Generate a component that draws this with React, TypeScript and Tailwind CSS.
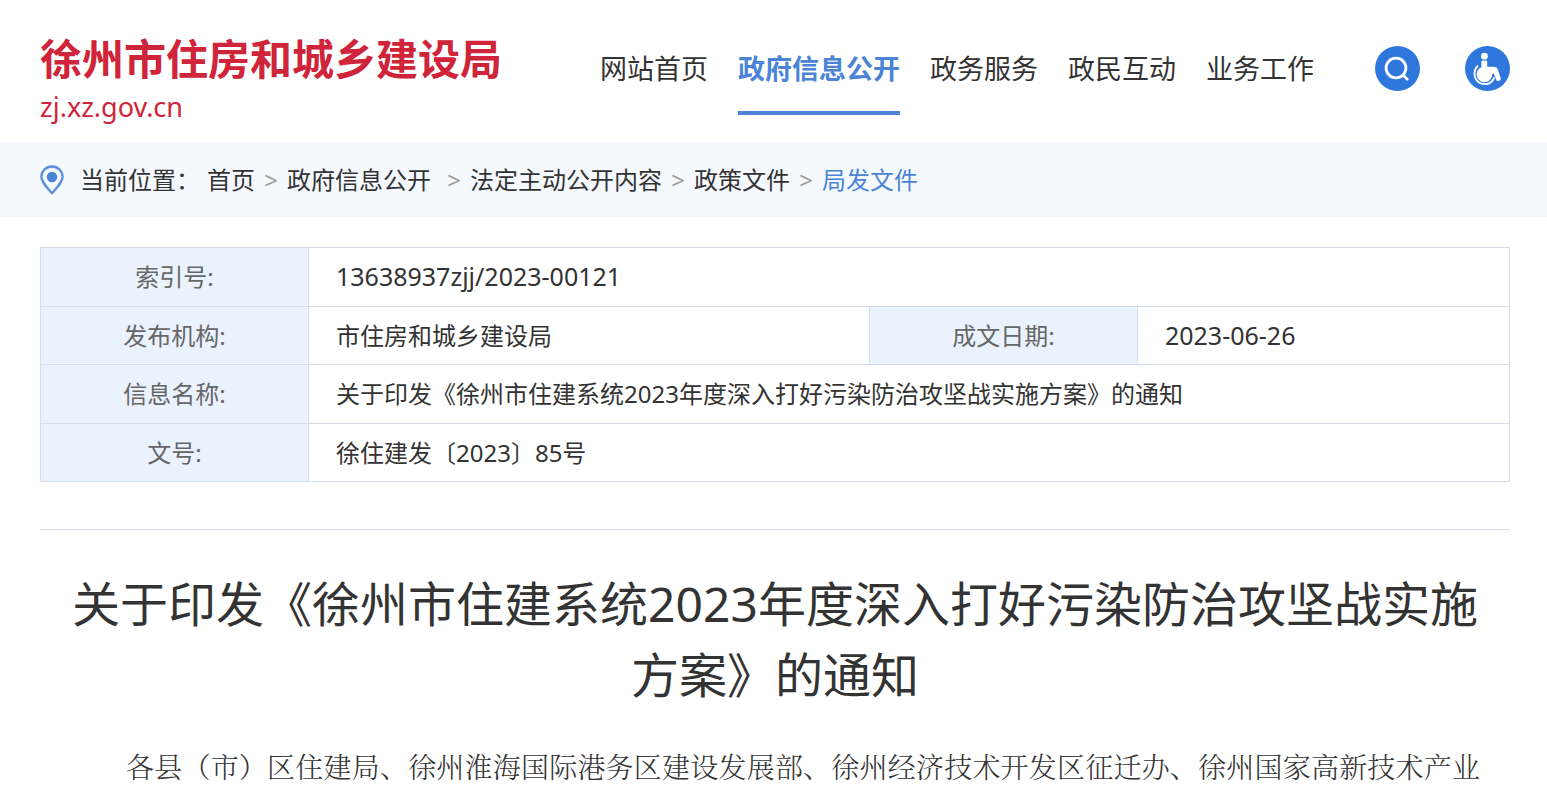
const navItems = [
  { name: "网站首页", active: false },
  { name: "政府信息公开", active: true },
  { name: "政务服务", active: false },
  { name: "政民互动", active: false },
  { name: "业务工作", active: false },
];

const crumbs = ["首页", "政府信息公开", "法定主动公开内容", "政策文件", "局发文件"];

const labelCell = "border border-[#d3dee8] bg-[#eaf3fd] text-center font-normal text-[#666]";
const valueCell = "border border-[#d3dee8] pl-[27px] text-left";

function SearchIcon() {
  return (
    <svg viewBox="0 0 45 45" className="size-[45px]" aria-hidden="true">
      <circle cx="22.5" cy="22.5" r="22.5" fill="#2f77dc" />
      <circle cx="21" cy="22" r="9.9" fill="none" stroke="#fff" strokeWidth="2.8" />
      <path d="M27.800 28.800l5.200 5.200" stroke="#fff" strokeWidth="2.8" />
    </svg>
  );
}

function AccessIcon() {
  return (
    <svg viewBox="0 0 45 45" className="size-[45px]" aria-hidden="true">
      <circle cx="22.5" cy="22.5" r="22.5" fill="#2f77dc" />
      <circle cx="19.4" cy="10.200" r="3.400" fill="#fff" />
      <path
        d="M16.400 15.500c0-1.400 5.800-1.400 5.800 0v5.200h6.300c2.600 0 3.800.8 4.500 3.200l2.900 8.800-1.200 2h-3l-2.900-6.900-1.600.1a7.800 7.800 0 1 1-10.800-6.700z"
        fill="#fff"
      />
      <path
        d="M13 19.700c-4.200 3.300-4.700 10.300-1.200 14.700 4 5 11.900 5 15.700.2.800-1 1.400-2.100 1.700-3.400"
        fill="none"
        stroke="#fff"
        strokeWidth="1.800"
      />
    </svg>
  );
}

function PinIcon() {
  return (
    <svg viewBox="0 0 24 30" className="mr-4 h-[30px] w-6" aria-hidden="true">
      <path
        d="M12 1.500C6.200 1.500 1.400 6 1.400 11.800c0 5 4.600 9.600 10.600 16.400 6-6.800 10.600-11.400 10.600-16.400C22.600 6 17.800 1.500 12 1.500z"
        fill="#f5f9fe"
        stroke="#5b90dc"
        strokeWidth="2.300"
        strokeLinejoin="round"
      />
      <circle cx="12" cy="12" r="5.200" fill="#4b84d6" />
    </svg>
  );
}

export default function App() {
  return (
    <div className="bg-white font-['Noto_Sans','Noto_Sans_CJK_SC',sans-serif] text-[#333]" lang="zh-CN">
      <header className="flex h-[142px] items-start pr-[37px] pl-10">
        <a href="#" className="mt-8 block w-[560px] shrink-0 text-[#cf2439]">
          <span className="block text-[42px] leading-[54px] font-bold">徐州市住房和城乡建设局</span>
          <span className="block text-[27px] leading-[42px]">zj.xz.gov.cn</span>
        </a>
        <nav className="mt-6 flex gap-[30px] text-[27px]">
          {navItems.map((item) => (
            <a
              key={item.name}
              href="#"
              className={`h-[91px] border-b-4 leading-[90px] whitespace-nowrap ${
                item.active ? "border-[#4b84d6] font-bold text-[#4b84d6]" : "border-transparent"
              }`}
            >
              {item.name}
            </a>
          ))}
        </nav>
        <div className="mt-[46px] ml-auto flex gap-[45px]">
          <button type="button" aria-label="搜索">
            <SearchIcon />
          </button>
          <button type="button" aria-label="无障碍">
            <AccessIcon />
          </button>
        </div>
      </header>

      <div className="flex h-[75px] items-center bg-[#f5f9fe] px-10 text-2xl">
        <PinIcon />
        <span className="mr-[7px]">当前位置：</span>
        {crumbs.map((crumb, index) => (
          <span key={crumb} className="flex">
            {index > 0 && (
              <span className={`w-8 text-center text-[#999] ${index === 2 ? "ml-[7px]" : ""}`}>&gt;</span>
            )}
            <a href="#" className={index === crumbs.length - 1 ? "text-[#4b84d6]" : ""}>
              {crumb}
            </a>
          </span>
        ))}
      </div>

      <main className="pr-[37px] pl-10">
        <table className="mt-[30px] w-full table-fixed border-collapse text-2xl">
          <colgroup>
            <col className="w-[268px]" />
            <col />
            <col className="w-[268px]" />
            <col className="w-[372px]" />
          </colgroup>
          <tbody>
            <tr className="h-[59px]">
              <th className={labelCell}>索引号:</th>
              <td className={`${valueCell} text-[25px]`} colSpan={3}>13638937zjj/2023-00121</td>
            </tr>
            <tr className="h-[58px]">
              <th className={labelCell}>发布机构:</th>
              <td className={valueCell}>市住房和城乡建设局</td>
              <th className={labelCell}>成文日期:</th>
              <td className={`${valueCell} text-[25px]`}>2023-06-26</td>
            </tr>
            <tr className="h-[59px]">
              <th className={labelCell}>信息名称:</th>
              <td className={valueCell} colSpan={3}>关于印发《徐州市住建系统2023年度深入打好污染防治攻坚战实施方案》的通知</td>
            </tr>
            <tr className="h-[58px]">
              <th className={labelCell}>文号:</th>
              <td className={valueCell} colSpan={3}>徐住建发〔2023〕85号</td>
            </tr>
          </tbody>
        </table>

        <article className="mt-[47px] border-t border-[#d3dee8] px-[30px] pt-[38px]">
          <h1 className="text-center text-5xl leading-[71px]">
            关于印发《徐州市住建系统2023年度深入打好污染防治攻坚战实施方案》的通知
          </h1>
          <p className="mt-7 indent-14 font-['Noto_Serif_CJK_SC','Noto_Sans_CJK_SC',serif] text-[28px] leading-[56px] font-light [text-align-last:justify]">
            各县（市）区住建局、徐州淮海国际港务区建设发展部、徐州经济技术开发区征迁办、徐州国家高新技术产业
          </p>
        </article>
      </main>
    </div>
  );
}
